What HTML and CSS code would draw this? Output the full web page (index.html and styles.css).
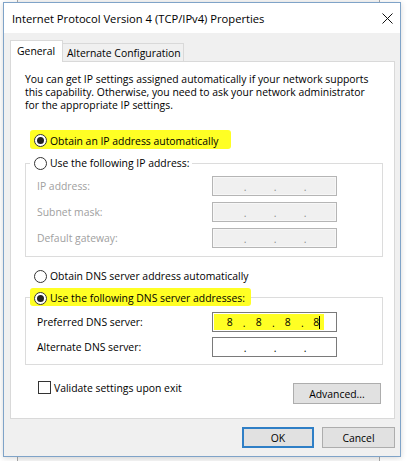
FILE: index.html
```html
<!DOCTYPE html>
<html>
<head>
<meta charset="utf-8">
<title>Internet Protocol Version 4 (TCP/IPv4) Properties</title>
<link rel="stylesheet" href="styles.css">
</head>
<body>
<div class="backwin"></div>
<div class="dialog">
  <div class="titlebar">
    <span class="title">Internet Protocol Version 4 (TCP/IPv4) Properties</span>
    <svg class="close" viewBox="0 0 11 11" width="11" height="11"><path d="M0.5 0.5L10.5 10.5M10.5 0.5L0.5 10.5" stroke="#111" stroke-width="1" fill="none"/></svg>
  </div>
  <div class="content">
    <div class="tabs">
      <div class="tab active">General</div>
      <div class="tab">Alternate Configuration</div>
    </div>
    <div class="panel">
      <p class="intro">You can get IP settings assigned automatically if your network supports<br>this capability. Otherwise, you need to ask your network administrator<br>for the appropriate IP settings.</p>

      <div class="choice hl hl-first"><span class="radio on"></span><span>Obtain an IP address automatically</span></div>

      <div class="group group-ip">
        <div class="legend legend-plain"><span class="radio"></span><span>Use the following IP address:</span></div>
        <div class="field disabled"><span class="lbl">IP address:</span><span class="ipbox"><span class="seg"></span><span class="dot">.</span><span class="seg"></span><span class="dot">.</span><span class="seg"></span><span class="dot">.</span><span class="seg"></span></span></div>
        <div class="field disabled"><span class="lbl">Subnet mask:</span><span class="ipbox"><span class="seg"></span><span class="dot">.</span><span class="seg"></span><span class="dot">.</span><span class="seg"></span><span class="dot">.</span><span class="seg"></span></span></div>
        <div class="field disabled"><span class="lbl">Default gateway:</span><span class="ipbox"><span class="seg"></span><span class="dot">.</span><span class="seg"></span><span class="dot">.</span><span class="seg"></span><span class="dot">.</span><span class="seg"></span></span></div>
      </div>

      <div class="choice choice-dns"><span class="radio"></span><span>Obtain DNS server address automatically</span></div>

      <div class="group group-dns">
        <div class="legend hl hl-second"><span class="radio on"></span><span>Use the following DNS server addresses:</span></div>
        <div class="field"><span class="lbl">Preferred DNS server:</span><span class="ipbox"><span class="fill"><span class="seg">8</span><span class="dot">.</span><span class="seg">8</span><span class="dot">.</span><span class="seg">8</span><span class="dot">.</span><span class="seg last">8<span class="caret"></span></span></span></span></div>
        <div class="field"><span class="lbl">Alternate DNS server:</span><span class="ipbox"><span class="seg"></span><span class="dot">.</span><span class="seg"></span><span class="dot">.</span><span class="seg"></span><span class="dot">.</span><span class="seg"></span></span></div>
      </div>

      <div class="bottomrow">
        <div class="check"><span class="box"></span><span>Validate settings upon exit</span></div>
        <button class="btn adv">Advanced...</button>
      </div>
    </div>
    <div class="footer">
      <button class="btn ok">OK</button>
      <button class="btn cancel">Cancel</button>
    </div>
  </div>
</div>
</body>
</html>
```
FILE: styles.css
```css
* { box-sizing: border-box; }
html, body { margin: 0; padding: 0; }
body {
  width: 407px;
  height: 461px;
  position: relative;
  overflow: hidden;
  background: #ffffff;
  font-family: "Open Sans", "Noto Sans", sans-serif;
  font-size: 10.4px;
  color: #000;
}
.backwin {
  position: absolute;
  left: 17px;
  top: 0;
  width: 363px;
  height: 461px;
  border-left: 1px solid #a9a9a9;
  border-right: 1px solid #a9a9a9;
  background: #f7f7f7;
}
.dialog {
  position: absolute;
  left: 3px;
  top: 2px;
  width: 398px;
  height: 455px;
  border: 1px solid #7fa3c8;
  background: #f0f0f0;
  box-shadow: 0 1px 6px rgba(0, 0, 0, 0.16);
  display: flex;
  flex-direction: column;
}
.titlebar {
  height: 30px;
  flex-shrink: 0;
  background: #ffffff;
  display: flex;
  align-items: center;
  padding-left: 8px;
}
.title { flex: 1; font-size: 11.2px; }
.close { margin-right: 7px; margin-top: 1px; display: block; }

.content { display: flex; flex-direction: column; padding: 7px 5px 0 6px; }
.tabs {
  display: flex;
  align-items: flex-end;
  margin-bottom: -1px;
  position: relative;
  z-index: 2;
}
.tab {
  height: 18px;
  margin-bottom: 1px;
  padding: 0 4px 0 4px;
  border: 1px solid #d9d9d9;
  border-bottom: none;
  border-left: none;
  background: #f0f0f0;
  display: flex;
  align-items: center;
  white-space: nowrap;
  width: 121px;
}
.tab.active {
  height: 22px;
  margin-bottom: 0;
  width: 53px;
  padding-left: 6px;
  padding-bottom: 2px;
  border-left: 1px solid #d9d9d9;
  background: #ffffff;
}
.panel {
  height: 358px;
  background: #ffffff;
  border: 1px solid #d9d9d9;
  display: flex;
  flex-direction: column;
  position: relative;
  z-index: 1;
}
.intro {
  margin: 11px 0 0 14px;
  line-height: 13px;
}

.radio {
  width: 13px;
  height: 13px;
  border: 1px solid #333;
  border-radius: 50%;
  background: #fff;
  flex-shrink: 0;
  margin-right: 3px;
  display: flex;
  align-items: center;
  justify-content: center;
}
.radio.on::after {
  content: "";
  width: 7px;
  height: 7px;
  border-radius: 50%;
  background: #222;
}

.choice {
  display: flex;
  align-items: center;
  align-self: flex-start;
  white-space: nowrap;
}
.hl {
  background: #ffff24;
  border-radius: 3px;
  padding-left: 4px;
}
.hl-first {
  margin: 18px 0 0 19px;
  height: 19px;
  padding-top: 2px;
  padding-right: 12px;
}
.choice-dns {
  margin: 11px 0 0 23px;
  height: 16px;
}

.group {
  margin: 0 11px 0 14px;
  border: 1px solid #dcdcdc;
  display: flex;
  flex-direction: column;
  padding-left: 11px;
}
.group-ip { margin-top: 14px; padding-bottom: 8px; }
.group-dns { margin-top: 13px; padding-bottom: 7px; }
.legend {
  display: flex;
  align-items: center;
  align-self: flex-start;
  white-space: nowrap;
  margin-left: -7px;
  padding-left: 4px;
}
.legend-plain {
  height: 16px;
  margin-top: -9px;
  background: #fff;
  padding-right: 3px;
}
.hl-second {
  height: 18px;
  margin-top: -10px;
  padding-top: 2px;
  padding-right: 6px;
}

.field {
  display: flex;
  align-items: center;
  height: 20px;
}
.group-ip .field { margin-top: 6px; }
.group-ip .legend + .field { margin-top: 5px; }
.group-dns .field { margin-top: 5px; }
.group-dns .legend + .field { margin-top: 6px; }
.lbl { width: 175px; flex-shrink: 0; }
.field.disabled .lbl { color: #a0a0a0; }

.ipbox {
  width: 125px;
  height: 20px;
  border: 1px solid #7a7a7a;
  background: #fff;
  display: flex;
  align-items: center;
  padding: 1px 0 1px 4px;
}
.field.disabled .ipbox {
  border-color: #b5b5b5;
  background: #f0f0f0;
  box-shadow: inset 0 0 0 1px #f7f7f7;
}
.seg {
  width: 26px;
  text-align: center;
  display: flex;
  justify-content: center;
  align-items: center;
  position: relative;
}
.dot {
  width: 4px;
  text-align: center;
  line-height: 1;
  position: relative;
  top: 1px;
}
.field.disabled .dot { color: #8c8c8c; }
.fill {
  display: flex;
  align-items: center;
  height: 16px;
  width: 110px;
  margin-left: -3px;
  padding-left: 3px;
  background: #ffff24;
}
.seg.last { justify-content: flex-start; padding-left: 9px; width: 20px; }
.caret {
  display: inline-block;
  width: 1px;
  height: 13px;
  background: #000;
}

.bottomrow {
  display: flex;
  justify-content: space-between;
  align-items: flex-start;
  margin: 18px 13px 0 27px;
}
.check {
  display: flex;
  align-items: center;
  margin-top: -2px;
  height: 13px;
  white-space: nowrap;
}
.check .box {
  width: 13px;
  height: 13px;
  border: 1px solid #333;
  background: #fff;
  margin-right: 3px;
}
.btn {
  font-family: inherit;
  font-size: inherit;
  color: #000;
  background: #e1e1e1;
  border: 1px solid #adadad;
  height: 21px;
  padding: 0;
  margin: 0;
}
.adv { width: 88px; }
.footer {
  display: flex;
  justify-content: flex-end;
  gap: 8px;
  padding-top: 8px;
}
.ok { width: 72px; border: 2px solid #2f7fc6; }
.cancel { width: 73px; }
```
